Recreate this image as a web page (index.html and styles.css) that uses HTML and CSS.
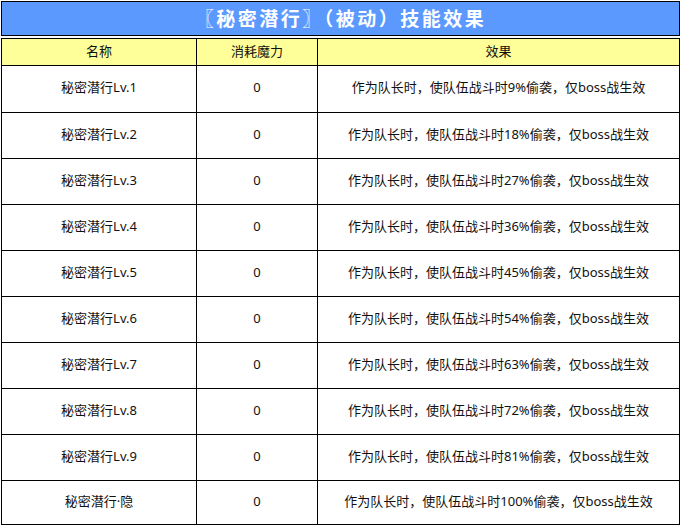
FILE: index.html
```html
<!DOCTYPE html>
<html lang="zh">
<head>
<meta charset="utf-8">
<title>秘密潜行</title>
<link rel="stylesheet" href="styles.css">
</head>
<body>
<div class="page">
  <div class="title">〖秘密潜行〗（被动）技能效果</div>
  <div class="grid">
    <div class="cell head">名称</div>
    <div class="cell head">消耗魔力</div>
    <div class="cell head">效果</div>

    <div class="cell">秘密潜行Lv.1</div>
    <div class="cell">0</div>
    <div class="cell">作为队长时，使队伍战斗时9%偷袭，仅boss战生效</div>

    <div class="cell">秘密潜行Lv.2</div>
    <div class="cell">0</div>
    <div class="cell">作为队长时，使队伍战斗时18%偷袭，仅boss战生效</div>

    <div class="cell">秘密潜行Lv.3</div>
    <div class="cell">0</div>
    <div class="cell">作为队长时，使队伍战斗时27%偷袭，仅boss战生效</div>

    <div class="cell">秘密潜行Lv.4</div>
    <div class="cell">0</div>
    <div class="cell">作为队长时，使队伍战斗时36%偷袭，仅boss战生效</div>

    <div class="cell">秘密潜行Lv.5</div>
    <div class="cell">0</div>
    <div class="cell">作为队长时，使队伍战斗时45%偷袭，仅boss战生效</div>

    <div class="cell">秘密潜行Lv.6</div>
    <div class="cell">0</div>
    <div class="cell">作为队长时，使队伍战斗时54%偷袭，仅boss战生效</div>

    <div class="cell">秘密潜行Lv.7</div>
    <div class="cell">0</div>
    <div class="cell">作为队长时，使队伍战斗时63%偷袭，仅boss战生效</div>

    <div class="cell">秘密潜行Lv.8</div>
    <div class="cell">0</div>
    <div class="cell">作为队长时，使队伍战斗时72%偷袭，仅boss战生效</div>

    <div class="cell">秘密潜行Lv.9</div>
    <div class="cell">0</div>
    <div class="cell">作为队长时，使队伍战斗时81%偷袭，仅boss战生效</div>

    <div class="cell">秘密潜行·隐</div>
    <div class="cell">0</div>
    <div class="cell">作为队长时，使队伍战斗时100%偷袭，仅boss战生效</div>
  </div>
</div>
</body>
</html>
```

FILE: styles.css
```css
html, body {
  margin: 0;
  padding: 0;
  background: #ffffff;
}

.page {
  padding: 1px 0 0 1px;
  width: 679px;
  font-family: "Noto Sans", "Noto Sans CJK SC", sans-serif;
  font-size: 13px;
  color: #111111;
}

.title {
  box-sizing: border-box;
  height: 35px;
  border: 1px solid #000000;
  background: #5c99ff;
  color: #ffffff;
  font-family: "Noto Sans CJK SC", sans-serif;
  font-weight: bold;
  font-size: 19px;
  letter-spacing: 2.5px;
  line-height: 1;
  padding-bottom: 2px;
  display: flex;
  align-items: center;
  justify-content: center;
}

.grid {
  margin-top: 2px;
  display: grid;
  grid-template-columns: 194px 120px 361px;
  grid-template-rows: 26px 46px repeat(8, 45px) 43px;
  gap: 1px;
  padding: 1px;
  background: #000000;
}

.cell {
  box-sizing: border-box;
  background: #ffffff;
  display: flex;
  align-items: center;
  justify-content: center;
  white-space: nowrap;
  line-height: 1;
  padding-bottom: 3px;
}

.head {
  background: #ffff99;
  padding-bottom: 1px;
}
```
